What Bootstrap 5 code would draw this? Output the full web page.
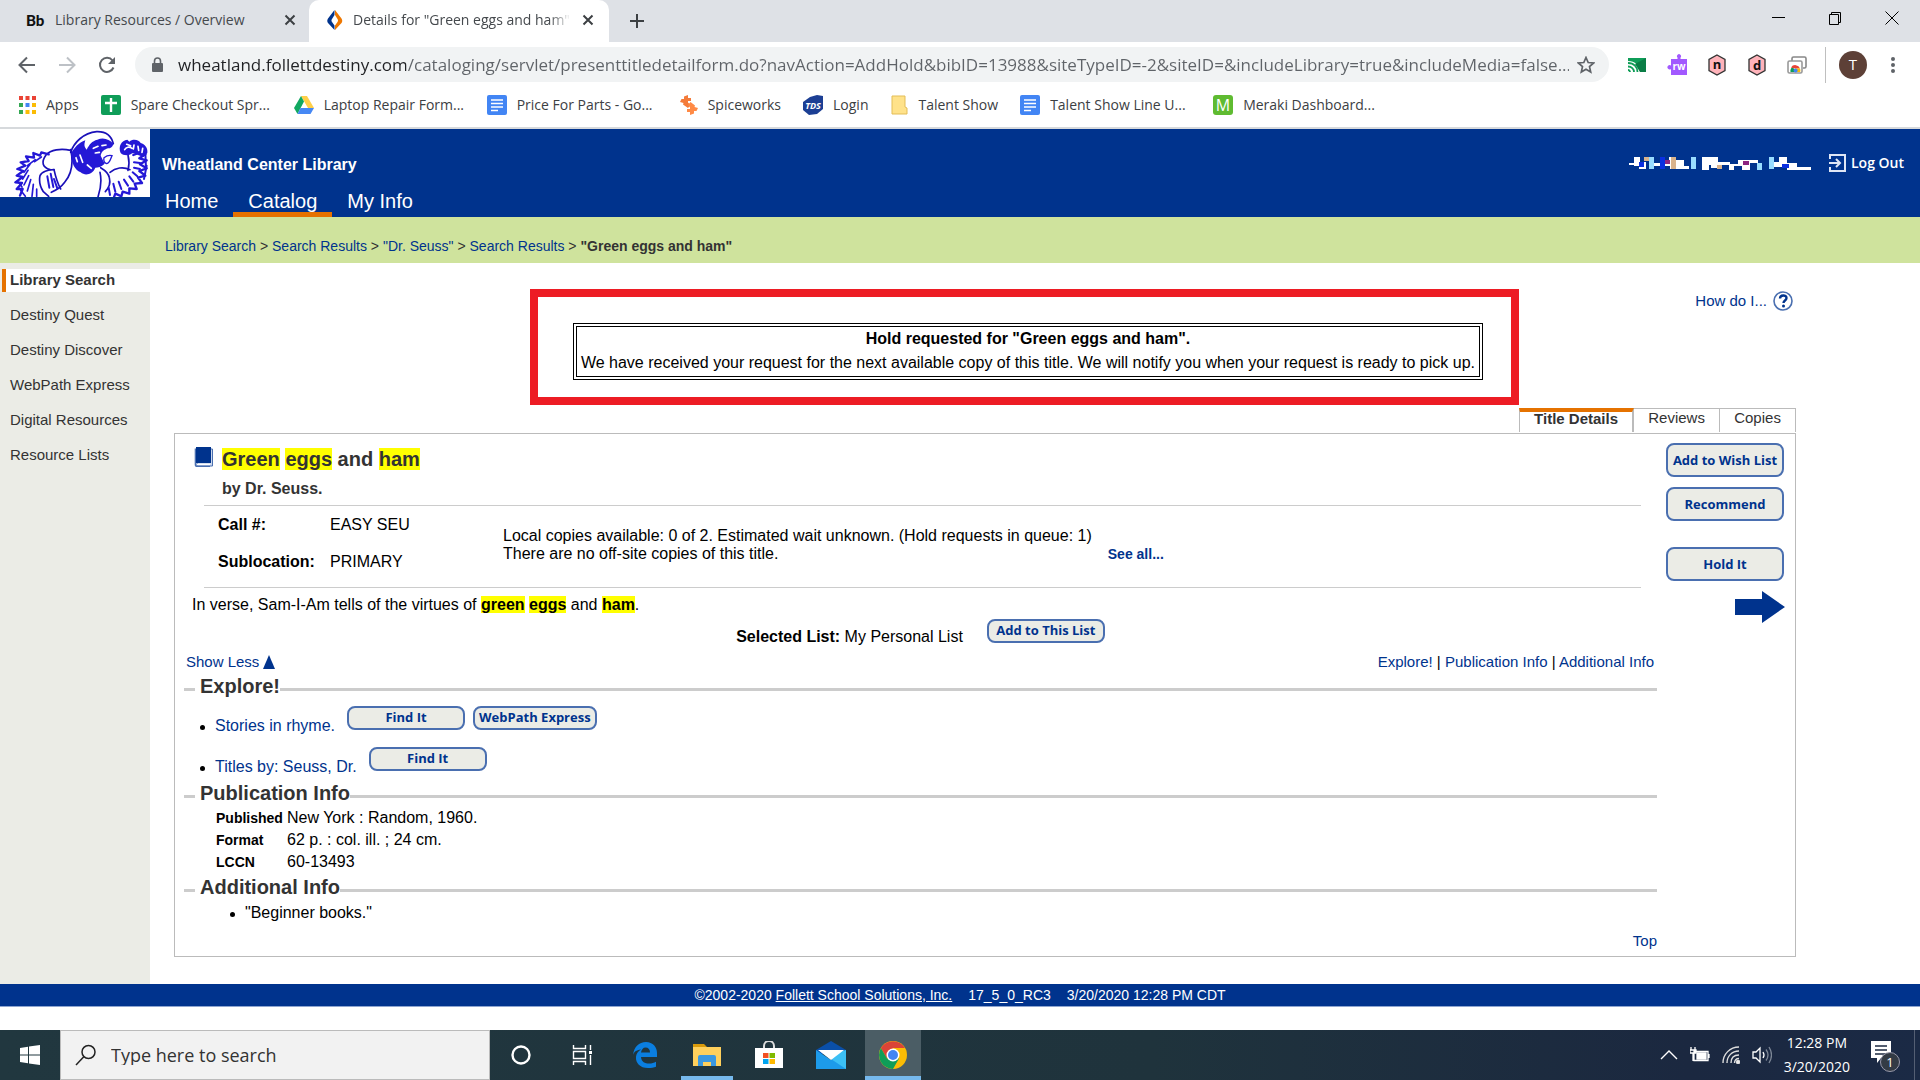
<!DOCTYPE html>
<html lang="en">
<head>
<meta charset="utf-8">
<meta name="viewport" content="width=device-width, initial-scale=1">
<title>Details for "Green eggs and ham"</title>
<link href="https://cdn.jsdelivr.net/npm/bootstrap@5.3.0/dist/css/bootstrap.min.css" rel="stylesheet">
<style>
  body { font-family: "Liberation Sans", Arial, sans-serif; font-size: 16px; line-height: 20px; color: #000; background: #fff; }
  a { color: #00338d; text-decoration: none; }
  a:hover { text-decoration: underline; }
  svg { display: block; flex: none; }
  h1, h2, ul, dl, dd, dt, p { margin: 0; padding: 0; }
  .ui-font { font-family: "Open Sans", "Noto Sans", sans-serif; }
  .bare { background: none; border: 0; padding: 0; }

  /* browser window */
  .tabstrip { background: #dee1e6; height: 42px; color: #45494d; font-size: 14px; }
  .btab { height: 42px; width: 300px; padding: 0 14px 2px 18px; gap: 10px; }
  .btab-first { width: 309px; padding: 0 12px 2px 26px; }
  .btab-open { background: #fff; border-radius: 10px 10px 0 0; }
  .btab-label { flex: 1; overflow: hidden; white-space: nowrap; }
  .btab-open .btab-label { -webkit-mask-image: linear-gradient(to right, #000 90%, transparent); mask-image: linear-gradient(to right, #000 90%, transparent); }
  .bb { font-family: "Lato", sans-serif; font-weight: 900; color: #111; font-size: 15px; width: 19px; }
  .winbtns { padding-bottom: 6px; }
  .winbtn { width: 57px; height: 32px; }
  .toolbar { height: 45px; padding: 0 17px 0 7px; }
  .navbtn { width: 40px; height: 36px; }
  .omnibox { background: #f1f3f4; border-radius: 18px; height: 35px; padding: 0 14px 0 15px; margin-left: 8px; }
  .omnibox input { border: 0; outline: 0; padding: 0 0 0 6px; margin-left: 8px; font-size: 17px; flex: 1; min-width: 0; color: transparent; background: linear-gradient(to right, #202124 234px, #5f6368 234px); -webkit-background-clip: text; background-clip: text; }
  .avatar { margin: 0 16px 0 13px; }
  .bookmarks { height: 42px; padding: 0 19px 4px; gap: 22px; font-size: 14px; border-bottom: 2px solid #d6d9dc; }
  .bookmarks a { color: #3c4043; display: flex; align-items: center; gap: 10px; white-space: nowrap; }
  .bookmarks .long { min-width: 141px; }

  /* library header */
  .masthead { background: #00338d; height: 88px; color: #fff; }
  .masthead a { color: #fff; }
  .sitename { padding: 26px 0 0 12px; }
  .mainnav { font-size: 20px; line-height: 22px; }
  .mainnav a { display: block; padding: 0 15px; border-bottom: 5px solid transparent; }
  .mainnav a.current { border-bottom-color: #e57200; }
  .logout { font-family: "Open Sans", sans-serif; font-weight: 600; font-size: 14px; }
  .crumbs { background: #cfe39d; height: 46px; padding: 19px 0 0 165px; font-size: 14px; color: #333; }
  .side { background: #ebece6; width: 150px; padding-top: 6px; font-size: 15px; }
  .side a { display: block; color: #333; padding: 1px 0 2px 10px; margin-bottom: 12px; }
  .side a.current { background: #fff; font-weight: bold; border-left: 4px solid #e57200; margin-left: 2px; padding-left: 4px; }
  .main-area { padding: 26px 124px 20px 24px; }
  .callout { border: 8px solid #ed1c24; padding: 26px 28px 17px 35px; }
  .notice { border: 4px double #000; padding: 0 4px 1px; text-align: center; line-height: 24px; }
  .rail { width: 277px; }
  .help { font-size: 15px; margin-right: 3px; gap: 6px; min-height: 24px; }
  .ptabs { font-size: 15px; line-height: 18px; margin-top: 3px; }
  .ptabs a { color: #333; border: 1px solid #bbb; border-left: 0; border-bottom: 0; height: 24px; text-align: center; flex: 1 1 auto; }
  .ptabs a.current { font-weight: bold; border: 2px solid #bbb; border-top: 4px solid #e57200; border-bottom: 0; border-left: 1px solid #bbb; line-height: 14px; }
  .panel { border: 1px solid #bbb; margin-top: 1px; }
  .record { padding: 13px 0 5px 9px; }
  .booktitle { padding-left: 10px; }
  .title { font-size: 20px; line-height: 24px; font-weight: bold; color: #333; }
  .byline { font-weight: bold; color: #333; }
  .hit { background: #ff0; }
  .rule { height: 1px; background: #ccc; margin: 6px 16px 0 20px; }
  .facts { padding: 9px 0 9px 34px; }
  .facts dl { width: 285px; display: grid; grid-template-columns: 112px 1fr; row-gap: 17px; }
  .holdings { line-height: 18px; gap: 16px; padding-top: 3px; }
  .summary { margin-top: 7px; }
  .pill { font-family: "Open Sans", sans-serif; font-weight: bold; font-size: 13px; line-height: 16px; color: #00338d; background: #ebece6; border: 2px solid #4a6fb0; border-radius: 8px; padding: 1px 4px 3px; min-width: 118px; white-space: nowrap; }
  .pill-tall { height: 34px; width: 118px; padding: 0; margin-bottom: 10px; }
  .jumps { font-size: 15px; padding: 5px 3px 2px 2px; }
  .section-head { display: flex; align-items: center; font-size: 20px; line-height: 24px; font-weight: bold; color: #333; }
  .section-head::before, .section-head::after { content: ""; height: 3px; background: #ccc; margin-top: 6px; }
  .section-head::before { width: 11px; margin-right: 5px; }
  .section-head::after { flex: 1; }
  .dots { padding-left: 16px; }
  .dots-inner { padding-left: 46px; }
  .dots li { list-style: none; display: flex; align-items: flex-end; gap: 12px; }
  .dots li::before { content: ""; width: 5px; height: 5px; border-radius: 50%; background: #000; margin: 0 -2px 6px 0; }
  .dots .pills { display: flex; gap: 8px; margin-bottom: 6px; }
  .dots li + li { margin-top: 11px; }
  .pub { display: grid; grid-template-columns: 71px 1fr; line-height: 22px; padding: 2px 0 2px 32px; }
  .pub dt { font-size: 14px; }
  .backtop { font-size: 15px; }
  .actions { width: 138px; padding: 9px 10px 0 9px; }
  .colophon { background: #00338d; border-bottom: 1px solid #8ea5d0; height: 23px; color: #fff; font-size: 14px; gap: 16px; }
  .colophon a { color: #fff; text-decoration: underline; }

  /* desktop taskbar */
  .taskbar { height: 50px; margin-top: 23px; background: linear-gradient(to right, #21373f, #1f333c 60%, #1b2840 88%, #1b2a45); color: #fff; }
  .taskbar .cell { width: 62px; height: 50px; display: flex; align-items: center; justify-content: center; }
  .startcell { width: 60px; }
  .searchbox { width: 430px; background: #f2f2f2; border: 1px solid #bbb; gap: 14px; padding-left: 14px; }
  .searchbox input { border: 0; outline: 0; background: none; font-size: 18px; flex: 1; padding: 0; }
  .searchbox input::placeholder { color: #333; opacity: 1; }
  .taskbar .running { border-bottom: 4px solid #76b9ed; padding-top: 4px; width: 52px; margin: 0 5px; }
  .taskbar .front { background: #4b5d65; width: 56px; margin: 0 3px; }
  .tray { gap: 12px; padding-right: 5px; }
  .clock { font-size: 14px; line-height: 24px; text-align: center; }
</style>
<script src="https://cdn.jsdelivr.net/npm/bootstrap@5.3.0/dist/js/bootstrap.bundle.min.js"></script>
</head>
<body class="d-flex flex-column min-vh-100">

<header class="ui-font">
  <div class="tabstrip d-flex">
    <div class="btab btab-first d-flex align-items-center">
      <span class="bb">Bb</span><span class="btab-label">Library Resources / Overview</span>
      <button class="bare" aria-label="Close tab"><svg width="14" height="14" viewBox="0 0 14 14" stroke="#3c4043" stroke-width="2"><path d="M2.500 2.500l9 9M11.500 2.500l-9 9"/></svg></button>
    </div>
    <div class="btab btab-open d-flex align-items-center">
      <svg width="16" height="20" viewBox="0 0 16 20"><path d="M7.500 0L1 8.500c-1 1.500-1 3 0 4.500L7.500 20v-4.500L5 12c-.7-1-.7-2 0-3l2.500-4z" fill="#00338d"/><path d="M8 0l6.500 8.500c1 1.500 1 3 0 4.500L8 20v-4.500L10.500 12c.7-1 .7-2 0-3L8 5z" fill="#ee7700"/></svg>
      <span class="btab-label">Details for "Green eggs and ham"</span>
      <button class="bare" aria-label="Close tab"><svg width="14" height="14" viewBox="0 0 14 14" stroke="#3c4043" stroke-width="2"><path d="M2.500 2.500l9 9M11.500 2.500l-9 9"/></svg></button>
    </div>
    <button class="bare px-3 ms-1" aria-label="New tab"><svg width="16" height="16" viewBox="0 0 16 16" stroke="#3c4043" stroke-width="2"><path d="M8 1v14M1 8h14"/></svg></button>
    <div class="winbtns ms-auto d-flex align-items-center h-100">
      <button class="bare winbtn d-grid justify-content-center align-content-center" aria-label="Minimize"><svg width="14" height="14" viewBox="0 0 14 14" stroke="#000"><path d="M1 6.500h13"/></svg></button>
      <button class="bare winbtn d-grid justify-content-center align-content-center" aria-label="Restore"><svg width="14" height="14" viewBox="0 0 14 14" stroke="#000" fill="none"><path d="M1.500 3.500h9v10h-9zM3.500 3.500v-2h9v10h-2"/></svg></button>
      <button class="bare winbtn d-grid justify-content-center align-content-center" aria-label="Close"><svg width="14" height="14" viewBox="0 0 14 14" stroke="#000"><path d="M.5.5l13 13M13.500.5l-13 13"/></svg></button>
    </div>
  </div>
  <div class="toolbar d-flex align-items-center">
    <button class="bare navbtn d-grid justify-content-center align-content-center" aria-label="Back"><svg width="18" height="18" viewBox="0 0 18 18" fill="none" stroke="#5f6368" stroke-width="2"><path d="M17 9H2M9 1.500L1.500 9 9 16.500"/></svg></button>
    <button class="bare navbtn d-grid justify-content-center align-content-center" aria-label="Forward"><svg width="18" height="18" viewBox="0 0 18 18" fill="none" stroke="#bdc1c6" stroke-width="2"><path d="M1 9h15M9 1.500L16.500 9 9 16.500"/></svg></button>
    <button class="bare navbtn d-grid justify-content-center align-content-center" aria-label="Reload"><svg width="18" height="18" viewBox="0 0 18 18" fill="none" stroke="#5f6368" stroke-width="2"><path d="M15.500 11.500A7 7 0 1 1 14.500 4.500"/><path d="M17 1v7h-7z" fill="#5f6368" stroke="none"/></svg></button>
    <div class="omnibox d-flex align-items-center flex-grow-1">
      <svg width="14" height="16" viewBox="0 0 14 16"><rect x="2" y="6" width="11" height="9" rx="1" fill="#5f6368"/><path d="M4.500 6V4a3 3 0 0 1 6 0v2" fill="none" stroke="#5f6368" stroke-width="1.600"/></svg>
      <input aria-label="Address" value="wheatland.follettdestiny.com/cataloging/servlet/presenttitledetailform.do?navAction=AddHold&amp;bibID=13988&amp;siteTypeID=-2&amp;siteID=&amp;includeLibrary=true&amp;includeMedia=false...">
      <button class="bare ms-2" aria-label="Bookmark this page"><svg width="18" height="18" viewBox="0 0 18 18" fill="none" stroke="#5f6368" stroke-width="1.700"><path d="M9 1.500l2.200 5 5.400.5-4.100 3.600 1.200 5.400L9 13.200 4.300 16l1.200-5.400L1.400 7l5.400-.5z"/></svg></button>
    </div>
    <div class="d-flex align-items-center ms-2">
      <button class="bare navbtn d-grid justify-content-center align-content-center" aria-label="Cast"><svg width="20" height="16" viewBox="0 0 20 16"><path d="M1 1h18v14h-6C13 8 8 4 1 4z" fill="#0f9d58"/><path d="M13 15L8 7l11-6v14z" fill="#0b7d46"/><path d="M1 6c6 0 9.500 4 9.500 9M1 9.500c3.500 0 6 2.500 6 5.500M1 13a2 2 0 0 1 2 2" fill="none" stroke="#0f9d58" stroke-width="1.800"/></svg></button>
      <button class="bare navbtn d-grid justify-content-center align-content-center" aria-label="Read and write"><svg width="22" height="22" viewBox="0 0 22 22"><path d="M5 5h6.500V3.500a2 2 0 1 1 3 0V5H21v16H5v-6a2.200 2.200 0 1 1 0-3.500z" fill="#a259ff"/><text x="13" y="16" font-size="10" font-weight="bold" text-anchor="middle" fill="#fff">rw</text></svg></button>
      <button class="bare navbtn d-grid justify-content-center align-content-center" aria-label="Extension n"><svg width="20" height="22" viewBox="0 0 20 22"><path d="M10 1l8 4.500v11L10 21l-8-4.500v-11z" fill="#ffb3ba" stroke="#333" stroke-width="1.300"/><text x="10" y="15" font-size="13" font-weight="bold" text-anchor="middle" fill="#111">n</text></svg></button>
      <button class="bare navbtn d-grid justify-content-center align-content-center" aria-label="Extension d"><svg width="20" height="22" viewBox="0 0 20 22"><path d="M10 1l8 4.500v11L10 21l-8-4.500v-11z" fill="#ffb3ba" stroke="#333" stroke-width="1.300"/><text x="10" y="16" font-size="13" font-weight="bold" text-anchor="middle" fill="#111">d</text></svg></button>
      <button class="bare navbtn d-grid justify-content-center align-content-center" aria-label="Web store"><svg width="20" height="18" viewBox="0 0 20 18" fill="none"><path d="M5 5V2.500A1.500 1.500 0 0 1 6.500 1H17.500A1.500 1.500 0 0 1 19 2.500v8a1.500 1.500 0 0 1-1.500 1.500H16" stroke="#888" stroke-width="1.600"/><rect x="1" y="5" width="14" height="12" rx="1.500" fill="#fff" stroke="#999" stroke-width="1.600"/><path d="M3.500 16a5 5 0 0 1 2-5L8 14v2z" fill="#0f9d58"/><path d="M4 11.500a5 5 0 0 1 9 1H8z" fill="#ea4335"/><path d="M13 12.500a5 5 0 0 1 .2 3.500H9l-1-3.500z" fill="#fbbc05"/><circle cx="8.600" cy="14.500" r="2" fill="#4285f4"/></svg></button>
      <span class="vr ms-2"></span>
      <button class="bare avatar" aria-label="Profile"><svg width="28" height="28" viewBox="0 0 28 28"><circle cx="14" cy="14" r="14" fill="#5d4037"/><text x="14" y="19" font-size="15" text-anchor="middle" fill="#fff">T</text></svg></button>
      <button class="bare px-2" aria-label="Menu"><svg width="4" height="18" viewBox="0 0 4 18" fill="#5f6368"><circle cx="2" cy="3" r="2"/><circle cx="2" cy="9" r="2"/><circle cx="2" cy="15" r="2"/></svg></button>
    </div>
  </div>
  <nav class="bookmarks d-flex align-items-center" aria-label="Bookmarks">
    <a href="#"><svg width="17" height="18" viewBox="0 0 17 18"><g fill="#ea4335"><path d="M0 0h4v4H0zM6.500 0h4v4h-4zM13 0h4v4h-4z"/></g><path d="M0 7h4v4H0z" fill="#34a853"/><path d="M6.500 7h4v4h-4z" fill="#4285f4"/><path d="M13 7h4v4h-4z" fill="#fbbc05"/><path d="M0 14h4v4H0z" fill="#34a853"/><path d="M6.500 14h4v4h-4zM13 14h4v4h-4z" fill="#fbbc05"/></svg>Apps</a>
    <a href="#"><svg width="20" height="20" viewBox="0 0 20 20"><rect width="20" height="20" rx="2" fill="#0f9d58"/><path d="M10 3v14M4 8h12" stroke="#fff" stroke-width="2.400"/></svg><span class="long">Spare Checkout Spr...</span></a>
    <a href="#"><svg width="20" height="18" viewBox="0 0 20 18"><path d="M7 0h6l7 12h-6z" fill="#ffcf48"/><path d="M7 0l3 5.500L3.500 18 0 12z" fill="#11a861"/><path d="M6.500 12H20l-3.500 6h-13z" fill="#4688f4"/></svg><span class="long">Laptop Repair Form...</span></a>
    <a href="#"><svg width="20" height="20" viewBox="0 0 20 20"><rect width="20" height="20" rx="2" fill="#4285f4"/><path d="M4 5h12M4 8.500h12M4 12h12M4 15.500h7" stroke="#fff" stroke-width="1.700"/></svg><span class="long">Price For Parts - Go...</span></a>
    <a href="#"><svg width="18" height="20" viewBox="0 0 18 20"><path d="M8 0v3l3 0 0 3H8v1.500l2.500 2.500-2.500 3L3 9.500 3.500 8 0 7l1.500-3H4V1.500z" fill="#f47b3a"/><path d="M10 20v-3H7v-3h3v-1.500L8 10l2.500-3 4.500 3.500-.5 1.500 3.500 1-1.500 3H14v2.500z" fill="#ff8a45"/></svg>Spiceworks</a>
    <a href="#"><svg width="20" height="20" viewBox="0 0 20 20"><path d="M7 2l7-2 6 1v13l-6 5-8 1-6-5V7z" fill="#1c3f94"/><text x="10" y="14" font-size="9" font-style="italic" font-weight="bold" text-anchor="middle" fill="#fff">TDS</text></svg>Login</a>
    <a href="#"><svg width="18" height="20" viewBox="0 0 18 20"><path d="M2 1h13v11l2 1v6H2z" fill="#ffe28a" stroke="#e3bd57"/></svg>Talent Show</a>
    <a href="#"><svg width="20" height="20" viewBox="0 0 20 20"><rect width="20" height="20" rx="2" fill="#4285f4"/><path d="M4 5h12M4 8.500h12M4 12h12M4 15.500h7" stroke="#fff" stroke-width="1.700"/></svg><span class="long">Talent Show Line U...</span></a>
    <a href="#"><svg width="20" height="20" viewBox="0 0 20 20"><rect width="20" height="20" rx="3" fill="#5fbb31"/><text x="10" y="16" font-size="16" text-anchor="middle" fill="#fff">M</text></svg><span class="long">Meraki Dashboard...</span></a>
  </nav>
</header>

<div class="masthead d-flex">
  <svg width="150" height="68" viewBox="0 0 450 204" role="img" aria-label="Gorilla mascot">
    <rect width="450" height="204" fill="#fff"/>
    <g fill="none" stroke="#1a10b8" stroke-width="5" stroke-linecap="round" stroke-linejoin="round">
      <path d="M212 70C222 40 250 12 290 8c26-1 44 12 50 36"/>
      <path d="M212 64c-30-6-60-2-74 14-16 22-10 38 12 44"/>
      <path d="M212 62c8 36 4 72-18 98-10 14-26 24-40 30M162 122c-18 0-38 6-42 18-4 20 2 36 10 48l16 14"/>
      <path d="M162 122c4 18 10 40 20 58M300 130c6 26 2 50-6 74"/>
      <path d="M302 116c10 6 24 16 26 30 4 16 0 30-12 42M330 130c16-14 40-18 60-8"/>
      <path d="M384 78c4 16 4 30 0 46"/>
    </g>
    <g fill="none" stroke="#2418d6" stroke-width="7" stroke-linejoin="round" stroke-linecap="round">
      <path d="M146 76l-22-6-4 10-20-8 2 14-24-4 8 14-24 4 14 10-24 10 18 6-20 14 18 4-22 16 20 2-16 18 18 0-8 20"/>
      <path d="M124 84l-20 14M106 92l-24 18M90 106l-18 24M84 124l-16 26M86 140l-14 28M92 152l-10 34M100 166l-4 36M110 180l0 22M62 184l14 18M56 160l10 14" stroke-width="5"/>
      <path d="M142 142l6 34M152 134l8 40M162 150l10 28" stroke-width="6"/>
      <path d="M400 78l20-8 16 6-18 12 22 6-20 12 20 12-22 8 18 14-22 6 12 16-22 2 6 16-22-2 0 16-20-6-4 14-18-8-6 16" />
      <path d="M402 100l18 2M402 116l18 4M398 130l14 12M388 142l12 16M372 152l12 18M356 158l8 22M340 164l6 24M326 176l4 22M436 70l2 50M440 110l-8 40" stroke-width="6"/>
    </g>
    <g fill="#2418d6">
      <path d="M214 72c8-14 22-32 42-38-4 12-4 20 4 28 8-16 16-26 32-30 20-8 36 0 48 12-2 10-8 14-16 14-12 4-20 10-22 22l12 24c-10 10-20 12-28 12-8 20-30 26-44 14-18-8-28-26-28-58z"/>
      <path d="M312 86c8-6 16-8 24-6-4 8-6 22-16 24-8-2-10-8-8-18z" fill="#fff" stroke="#2418d6" stroke-width="4"/>
      <path d="M362 72c-8-20 2-38 20-40l6 6c10-10 30-6 34 4 12 4 22 14 20 30l-12 12-16-6c-8-6-18-8-22-2-6 4-24 4-30-4z"/>
    </g>
    <g stroke="#fff" stroke-width="5" fill="none" stroke-linecap="round">
      <path d="M240 78l8 22M280 58l14-6M286 72l12-2M262 108l12 10M228 86l4 12M306 50l12-2"/>
      <path d="M374 62c4-8 14-10 22-4M380 46l12 4M402 48l-2 12M414 52l2 12M428 58l-2 12"/>
    </g>
  </svg>
  <div class="d-flex flex-column justify-content-between flex-grow-1">
    <div class="sitename fw-bold">Wheatland Center Library</div>
    <nav class="mainnav d-flex"><a href="#">Home</a><a href="#" class="current">Catalog</a><a href="#">My Info</a></nav>
  </div>
  <div class="d-flex align-items-start gap-3 pt-4 me-3">
    <svg class="mt-1" width="182" height="14" viewBox="0 0 182 14" role="img" aria-label="Redacted name"><path fill="#fff" d="M0 6h5V0h6v5h6v7h-7V9H5V8H0zM25 6h15V0h4v3h11v6h5v3H41V9H25zM73 0h16v5h12v2h8V3h20v3h-8v7h-8V9h-8v4h-5V8h-9v3h-9V8h-2v5h-7zM140 5h10V0h8v6h10v4h14v3h-24v-3h-18z"/><path fill="#99ddff" d="M20 0h5v12h-5zM62 0h5v12h-5zM128 6h5v7h-5zM140 0h5v12h-5z"/><path fill="#0a2fe0" d="M31 0h5v12h-5zM10 5h5v5h-5zM153 7h7v4h-7z"/><path fill="#d9b38c" d="M42 0h5v12h-5zM15 0h5v4h-5zM88 8h5v4h-5z"/><path fill="#8c2580" d="M36 3h5v4h-5zM114 4h6v4h-6z"/></svg>
    <a href="#" class="logout d-flex align-items-center gap-1"><svg width="20" height="20" viewBox="0 0 20 20" fill="none" stroke="#dfe6f5" stroke-width="2"><path d="M3 6V2h15v16H3v-4M2 10h10M9 6l4 4-4 4"/></svg>Log Out</a>
  </div>
</div>
<nav class="crumbs" aria-label="Breadcrumb trail"><a href="#">Library Search</a> &gt; <a href="#">Search Results</a> &gt; <a href="#">"Dr. Seuss"</a> &gt; <a href="#">Search Results</a> &gt; <b>"Green eggs and ham"</b></nav>

<div class="d-flex flex-grow-1">
  <nav class="side flex-shrink-0" aria-label="Sections">
    <a href="#" class="current">Library Search</a><a href="#">Destiny Quest</a><a href="#">Destiny Discover</a><a href="#">WebPath Express</a><a href="#">Digital Resources</a><a href="#">Resource Lists</a>
  </nav>
  <main class="main-area flex-grow-1">
    <div class="d-flex">
      <div class="callout ms-auto"><div class="notice"><b class="d-block">Hold requested for "Green eggs and ham".</b>We have received your request for the next available copy of this title. We will notify you when your request is ready to pick up.</div></div>
      <div class="rail"><a href="#" class="help d-flex justify-content-end align-items-center">How do I... <svg width="20" height="22" viewBox="0 0 20 22"><circle cx="10" cy="11" r="9" fill="#fff" stroke="#4a6fb0" stroke-width="1.600"/><path d="M7 8.500c0-4 6.500-4 6.500-.5 0 2.500-3 2.500-3 5" fill="none" stroke="#00338d" stroke-width="2.400"/><circle cx="10.500" cy="16" r="1.500" fill="#00338d"/></svg></a></div>
    </div>
    <nav class="ptabs rail d-flex ms-auto" aria-label="Record views"><a href="#" class="current">Title Details</a><a href="#">Reviews</a><a href="#">Copies</a></nav>
    <section class="panel d-flex">
      <div class="record flex-grow-1">
        <div class="booktitle d-flex">
          <svg class="me-2" width="20" height="20" viewBox="0 0 20 20"><path d="M4 2h14.500v17H3z" fill="#cdd8ec" stroke="#4a6fb0"/><path d="M1.500 1.500V18c0 .8.500 1.300 1.500 1.300h13" fill="none" stroke="#4a6fb0" stroke-width="1.600"/><path d="M2 0h15v16H2z" fill="#00338d"/><path d="M3 17.500h13" stroke="#fff" stroke-width="1.400"/></svg>
          <div>
            <h1 class="title"><span class="hit">Green</span> <span class="hit">eggs</span> and <span class="hit">ham</span></h1>
            <div class="byline mt-2">by Dr. Seuss.</div>
          </div>
        </div>
        <div class="rule"></div>
        <div class="facts d-flex">
          <dl><dt>Call #:</dt><dd>EASY SEU</dd><dt>Sublocation:</dt><dd>PRIMARY</dd></dl>
          <div class="holdings d-flex align-items-end align-self-center"><p>Local copies available: 0 of 2. Estimated wait unknown. (Hold requests in queue: 1)<br>There are no off-site copies of this title.</p><a href="#" class="fw-bold small">See all...</a></div>
        </div>
        <div class="rule"></div>
        <p class="summary ps-2">In verse, Sam-I-Am tells of the virtues of <b class="hit">green</b> <b class="hit">eggs</b> and <b class="hit">ham</b>.</p>
        <div class="d-flex justify-content-center gap-4 pt-1"><span class="pt-2"><b>Selected List:</b> My Personal List</span><div><button class="pill">Add to This List</button></div></div>
        <div class="jumps d-flex justify-content-between">
          <a href="#" class="d-flex align-items-center gap-1">Show Less <svg width="12" height="14" viewBox="0 0 12 14"><path d="M6 0l6 14H0z" fill="#00338d"/></svg></a>
          <span><a href="#">Explore!</a> | <a href="#">Publication Info</a> | <a href="#">Additional Info</a></span>
        </div>
        <h2 class="section-head">Explore!</h2>
        <ul class="dots mt-2">
          <li><a href="#">Stories in rhyme.</a><span class="pills"><button class="pill">Find It</button><button class="pill">WebPath Express</button></span></li>
          <li><a href="#">Titles by: Seuss, Dr.</a><span class="pills"><button class="pill">Find It</button></span></li>
        </ul>
        <h2 class="section-head mt-1">Publication Info</h2>
        <dl class="pub"><dt>Published</dt><dd>New York : Random, 1960.</dd><dt>Format</dt><dd>62 p. : col. ill. ; 24 cm.</dd><dt>LCCN</dt><dd>60-13493</dd></dl>
        <h2 class="section-head">Additional Info</h2>
        <ul class="dots dots-inner mt-1"><li>"Beginner books."</li></ul>
        <div class="backtop text-end mt-2"><a href="#">Top</a></div>
      </div>
      <div class="actions flex-shrink-0 d-flex flex-column">
        <button class="pill pill-tall">Add to Wish List</button>
        <button class="pill pill-tall">Recommend</button>
        <button class="pill pill-tall mt-3">Hold It</button>
        <a href="#" class="ms-auto" aria-label="Next title"><svg width="50" height="32" viewBox="0 0 50 32"><path d="M0 8h27V0l23 16-23 16v-8H0z" fill="#00338d"/></svg></a>
      </div>
    </section>
  </main>
</div>
<footer>
  <div class="colophon d-flex justify-content-center align-items-center"><span>©2002-2020 <a href="#">Follett School Solutions, Inc.</a></span><span>17_5_0_RC3</span><span>3/20/2020 12:28 PM CDT</span></div>
  <div class="taskbar ui-font d-flex">
    <button class="bare startcell d-grid justify-content-center align-content-center" aria-label="Start"><svg width="20" height="20" viewBox="0 0 20 20" fill="#fff"><path d="M0 3l8-1.200v7.700H0zM9 1.600L20 0v9.500H9zM0 10.500h8v7.700L0 17zM9 10.500h11V20L9 18.400z"/></svg></button>
    <label class="searchbox d-flex align-items-center"><svg width="22" height="22" viewBox="0 0 22 22" fill="none" stroke="#222" stroke-width="1.500"><circle cx="13.500" cy="8" r="6.500"/><path d="M9 12.500L1 21"/></svg><input type="text" placeholder="Type here to search" aria-label="Type here to search"></label>
    <div class="cell"><svg width="22" height="22" viewBox="0 0 22 22"><circle cx="11" cy="11" r="8.500" fill="none" stroke="#fff" stroke-width="2.400"/></svg></div>
    <div class="cell"><svg width="22" height="20" viewBox="0 0 22 20" fill="none" stroke="#fff" stroke-width="1.400"><path d="M1.500 0v3.500h12V0M1.500 6.500h12v7h-12zM1.500 20v-3.500h12V20M18.500 0v5M18.500 10v10"/><path d="M17 6h3v3h-3z" fill="#fff" stroke="none"/></svg></div>
    <div class="cell"><svg width="26" height="26" viewBox="0 0 26 26"><path d="M1 13C2 5 7 0 14 0c7 0 11 5 11 11v4H9c.5 5 4 6.500 8 6.500 3 0 5-.8 7-1.800v5c-2 .8-5 1.300-8 1.300C8 26 3.500 21 4 15c.2-3 2-6 5-7.500C4 8 2 10 1 13zm8-2.500h9c0-3-1.500-5-4.500-5-2.500 0-4 2-4.500 5z" fill="#0a7ee0"/></svg></div>
    <div class="cell running"><svg width="28" height="24" viewBox="0 0 28 24"><path d="M0 1h11l3 3H0z" fill="#d99a0b"/><path d="M0 4h28v19H0z" fill="#ffd05c"/><path d="M5 23v-9q0-2 2-2h14q2 0 2 2v9h-5v-4h-8v4z" fill="#3b98e0"/></svg></div>
    <div class="cell"><svg width="30" height="28" viewBox="0 0 30 28"><path d="M10 8V5a5 5 0 0 1 10 0v3" fill="none" stroke="#ddd" stroke-width="2"/><path d="M1 7h28v20H1z" fill="#fff"/><path d="M9 12h5.500v5H9z" fill="#f25022"/><path d="M15.500 12H21v5h-5.500z" fill="#7fba00"/><path d="M9 18h5.500v5H9z" fill="#00a4ef"/><path d="M15.500 18H21v5h-5.500z" fill="#ffb900"/></svg></div>
    <div class="cell"><svg width="30" height="28" viewBox="0 0 30 28"><path d="M0 9L15 0l15 9v4H0z" fill="#0a4fa8"/><path d="M0 9l15 10L30 9v19H0z" fill="#1d9bea"/><path d="M30 9v19L9 14z" fill="#3cc0f5"/><path d="M2 9h26L15 19z" fill="#fff"/></svg></div>
    <div class="cell running front"><svg width="28" height="28" viewBox="0 0 28 28"><circle cx="14" cy="14" r="14" fill="#fbbc05"/><path d="M1.900 7A14 14 0 0 1 26 7H14L8 17.500z" fill="#db4437"/><path d="M1.900 7A14 14 0 0 0 14 28l6-10.500H8z" fill="#0f9d58"/><circle cx="14" cy="14" r="6.500" fill="#fff"/><circle cx="14" cy="14" r="5" fill="#4285f4"/></svg></div>
    <div class="tray d-flex align-items-center ms-auto">
      <svg width="18" height="10" viewBox="0 0 18 10" fill="none" stroke="#fff" stroke-width="1.400"><path d="M1 9l8-8 8 8"/></svg>
      <svg width="20" height="16" viewBox="0 0 20 16" fill="none" stroke="#fff" stroke-width="1.300"><path d="M4 4.500h14v9H4zM19 7v4M1 0v3M5 0v3M0 3h6v3H0zM3 6v8"/><path d="M7 6h9v6H7z" fill="#fff"/></svg>
      <svg width="18" height="18" viewBox="0 0 18 18" fill="none" stroke="#ddd" stroke-width="1.400"><path d="M1 17C1 8 8 1 17 1M5 17C5 10 10 5 17 5M9 17c0-5 3-8 8-8M12.500 17c0-3 1.500-4.500 4.500-4.500"/><circle cx="16" cy="16" r="1.500" fill="#fff"/></svg>
      <svg width="20" height="18" viewBox="0 0 20 18" fill="none" stroke="#fff" stroke-width="1.300"><path d="M1 6h3l4-4v14l-4-4H1zM11 6q2 3 0 6"/><path d="M14 3.500q4 5.500 0 11M17 1q5 8 0 16" stroke="#7d8796"/></svg>
      <div class="clock">12:28 PM<br>3/20/2020</div>
      <svg class="ms-2" width="32" height="36" viewBox="0 0 32 36"><path d="M1 4h20v17H11l-4 5v-5H1z" fill="#fff"/><path d="M5 9h12M5 13h12M5 17h12" stroke="#1b2840" stroke-width="1.500"/><circle cx="20" cy="25" r="9.500" fill="#333b45" stroke="#99a"/><text x="20" y="30" font-size="13" text-anchor="middle" fill="#fff">1</text></svg>
      <span class="vr"></span>
    </div>
  </div>
</footer>
</body>
</html>
